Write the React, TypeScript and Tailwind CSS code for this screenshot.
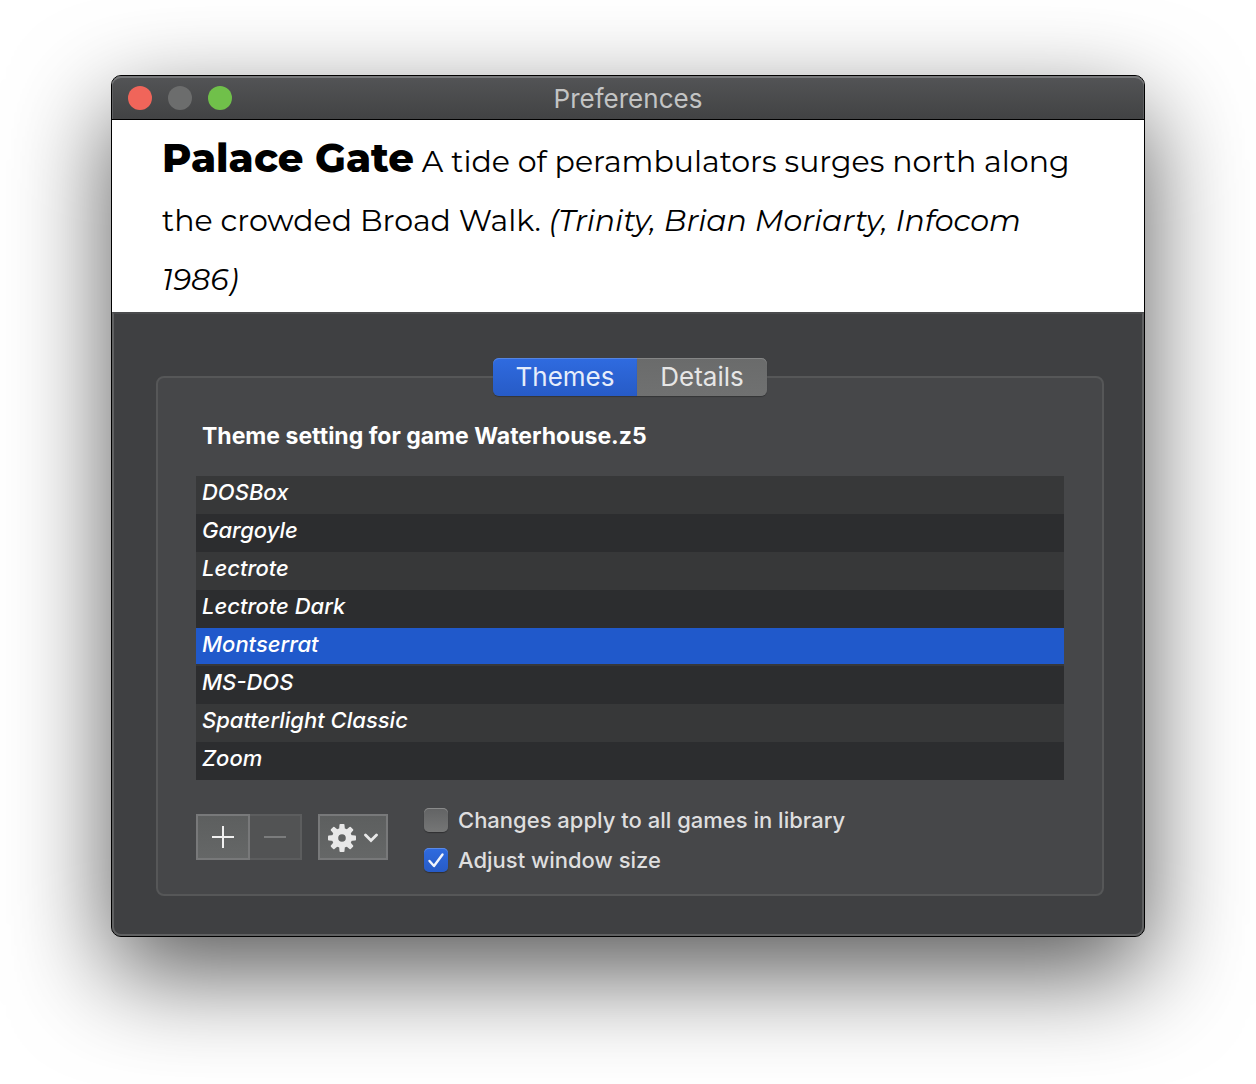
import { useState } from "react";

const themes = [
  "DOSBox",
  "Gargoyle",
  "Lectrote",
  "Lectrote Dark",
  "Montserrat",
  "MS-DOS",
  "Spatterlight Classic",
  "Zoom",
];

function TitleBar() {
  return (
    <header className="grid h-11 grid-cols-[1fr_auto_1fr] items-center rounded-t-[9px] border-b border-black bg-linear-to-b from-[#535456] to-[#424344] px-4 shadow-[inset_0_2px_0_#77787a,inset_1px_0_0_#5e5f61,inset_-1px_0_0_#5e5f61]">
      <div className="flex gap-4">
        <button aria-label="Close" className="size-6 rounded-full bg-[#f0655a]" />
        <button aria-label="Minimize" disabled className="size-6 rounded-full bg-[#6c6d6d]" />
        <button aria-label="Zoom" className="size-6 rounded-full bg-[#70c04a]" />
      </div>
      <h1 className="pt-0.5 text-[26px] leading-8 text-[#c3c4c4]">Preferences</h1>
    </header>
  );
}

function Preview() {
  return (
    <section className="bg-white pt-3 pr-10 pb-[3px] pl-[50px] font-[Montserrat,Inter,sans-serif] text-[30px] leading-[59px] text-black">
      <p>
        <strong className="text-[40px] leading-[1] font-extrabold">Palace Gate</strong> A tide of perambulators surges
        north along the crowded Broad Walk. <em>(Trinity, Brian Moriarty, Infocom 1986)</em>
      </p>
    </section>
  );
}

function ThemeList() {
  const [selected, setSelected] = useState("Montserrat");
  return (
    <ul className="mt-6" aria-label="Themes">
      {themes.map((name) => (
        <li key={name} className="pb-0.5 odd:bg-[#373839] even:bg-[#2c2d2f]">
          <button
            aria-pressed={name === selected}
            onClick={() => setSelected(name)}
            className={
              "block h-9 w-full px-1.5 pb-1 text-left text-[22px] leading-8 font-medium text-white italic " +
              (name === selected ? "bg-[#2059cb]" : "")
            }
          >
            {name}
          </button>
        </li>
      ))}
    </ul>
  );
}

function Check({ label, initial }: { label: string; initial: boolean }) {
  const [on, setOn] = useState(initial);
  return (
    <label className="flex h-6 items-center gap-2.5 text-[22px] leading-6 font-medium text-[#dededf]">
      <span className="grid size-6">
        <input
          type="checkbox"
          checked={on}
          onChange={() => setOn(!on)}
          className="col-start-1 row-start-1 size-6 appearance-none rounded-[5px] bg-linear-to-b from-[#626364] to-[#757676] shadow-[0_1px_1px_#0005,inset_0_1px_0_#8a8b8b] checked:from-[#2f6be0] checked:to-[#275bc6] checked:shadow-[0_1px_1px_#0005,inset_0_1px_0_#5b8ae6]"
        />
        {on && (
          <svg viewBox="0 0 24 24" aria-hidden="true" className="pointer-events-none col-start-1 row-start-1 size-6">
            <path
              d="M5.5 13l4.5 5L18.5 6.5"
              fill="none"
              stroke="#f2f5fc"
              strokeWidth="2.4"
              strokeLinecap="round"
              strokeLinejoin="round"
            />
          </svg>
        )}
      </span>
      {label}
    </label>
  );
}

function Gear() {
  const teeth = [0, 45, 90, 135, 180, 225, 270, 315];
  return (
    <svg viewBox="-14 -14 28 28" aria-hidden="true" className="size-7">
      <g fill="#e8e8e8">
        {teeth.map((a) => (
          <path key={a} transform={`rotate(${a})`} d="M-2.9 -8L-2.5 -13.2Q-2.4 -14 -1.6 -14H1.6Q2.4 -14 2.5 -13.2L2.9 -8Z" />
        ))}
        <path fillRule="evenodd" d="M0 -10A10 10 0 1 1 0 10A10 10 0 1 1 0 -10ZM0 -3.8A3.8 3.8 0 1 0 0 3.8A3.8 3.8 0 1 0 0 -3.8Z" />
      </g>
    </svg>
  );
}

function Toolbar() {
  return (
    <div className="flex items-start">
      <div className="mt-1.5 flex">
        <button
          aria-label="Add theme"
          className="grid h-[46px] w-[54px] place-items-center border-2 border-[#78797a] bg-linear-to-b from-[#5d5f5f] to-[#656767]"
        >
          <svg viewBox="0 0 22 22" aria-hidden="true" className="size-[22px]">
            <path d="M11 0V22M0 11H22" stroke="#f0f0f0" strokeWidth="2" />
          </svg>
        </button>
        <button
          aria-label="Remove theme"
          disabled
          className="grid h-[46px] w-[52px] place-items-center border-2 border-l-0 border-[#5c5d5e] bg-[#525354]"
        >
          <svg viewBox="0 0 22 22" aria-hidden="true" className="size-[22px]">
            <path d="M0 11H22" stroke="#7b7c7d" strokeWidth="2" />
          </svg>
        </button>
      </div>
      <button
        aria-label="Theme actions"
        className="mt-1.5 ml-4 flex h-[46px] w-[70px] items-center gap-2 border-2 border-[#78797a] bg-linear-to-b from-[#5d5f5f] to-[#656767] pt-0.5 pl-2"
      >
        <Gear />
        <svg viewBox="0 0 14 10" aria-hidden="true" className="h-2.5 w-3.5">
          <path d="M1.5 2L7 7.5L12.5 2" fill="none" stroke="#e8e8e8" strokeWidth="2.8" strokeLinecap="round" />
        </svg>
      </button>
      <div className="ml-9 flex flex-col gap-4">
        <Check label="Changes apply to all games in library" initial={false} />
        <Check label="Adjust window size" initial={true} />
      </div>
    </div>
  );
}

export default function App() {
  return (
    <main className="min-h-screen bg-white px-[111px] pt-[75px] pb-[147px] font-[Inter,sans-serif]">
      <div className="rounded-[10px] border border-black bg-[#3f4042] shadow-[0_36px_100px_rgba(0,0,0,0.66)]">
        <TitleBar />
        <Preview />
        <div className="rounded-b-[9px] border-2 border-[#606162] border-t-[#4a4b4d] pt-[62px] pr-[38px] pb-[38px] pl-[42px]">
          <section className="rounded-lg border-2 border-[#565758] bg-[#464749] px-[38px] pb-[22px]">
            <div role="tablist" className="-mt-5 flex justify-center text-[26px] leading-[38px]">
              <button
                role="tab"
                aria-selected="true"
                className="h-[38px] w-36 rounded-l-md bg-linear-to-b from-[#2f6be0] to-[#275bc6] text-[#e6edfb] shadow-[0_1px_1px_#0004,inset_0_1px_0_#5585e2]"
              >
                Themes
              </button>
              <button
                role="tab"
                aria-selected="false"
                className="h-[38px] w-[130px] rounded-r-md bg-linear-to-b from-[#6a6b6b] to-[#707171] text-[#e6e6e6] shadow-[0_1px_1px_#0004,inset_0_1px_0_#858686]"
              >
                Details
              </button>
            </div>
            <h2 className="mt-6 px-1.5 text-[23px] leading-8 font-bold text-white">
              Theme setting for game Waterhouse.z5
            </h2>
            <ThemeList />
            <div className="mt-7">
              <Toolbar />
            </div>
          </section>
        </div>
      </div>
    </main>
  );
}
